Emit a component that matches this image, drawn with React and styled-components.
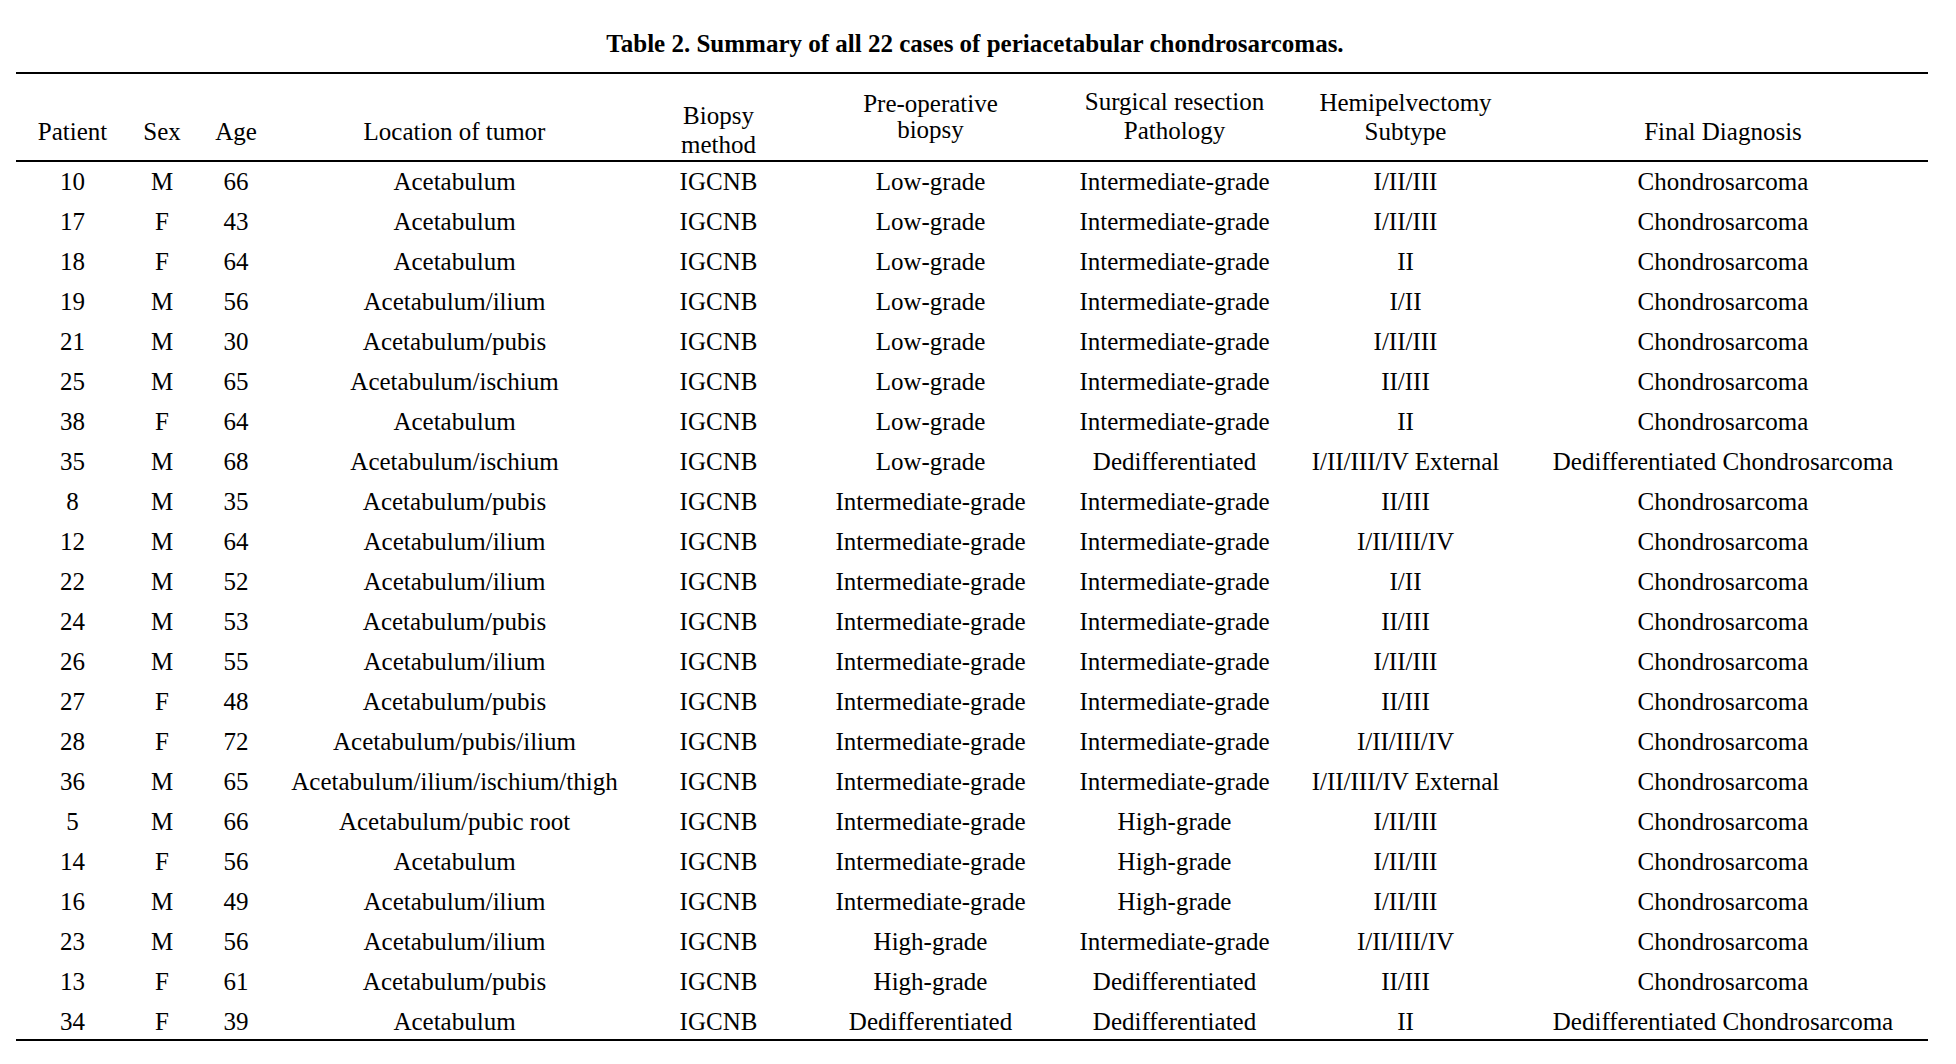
import React from "react";
import styled, { createGlobalStyle } from "styled-components";

const GlobalStyle = createGlobalStyle`
  html, body {
    margin: 0;
    padding: 0;
    background: #fff;
  }
  body {
    font-family: "Liberation Serif", "Times New Roman", serif;
    color: #000;
  }
`;

const COLUMNS = "113px 66px 82px 355px 173px 251px 237px 225px 410px";

const Page = styled.div`
  width: 1912px;
  padding: 0 16px;
`;

const Title = styled.h1`
  margin: 0 0 13px;
  padding: 29px 0 0 6px;
  font-size: 25px;
  line-height: 30px;
  font-weight: bold;
  text-align: center;
`;

const Table = styled.div`
  border-top: 2px solid #000;
  border-bottom: 2px solid #000;
  font-size: 25px;
`;

const Head = styled.div`
  display: grid;
  grid-template-columns: ${COLUMNS};
  height: 86px;
  border-bottom: 2px solid #000;
`;

const HeadCell = styled.div`
  display: flex;
  flex-direction: column;
  justify-content: flex-end;
  align-items: center;
  padding-bottom: ${props => props.$pb}px;
  line-height: ${props => props.$lh || 29}px;
  text-align: center;
  white-space: nowrap;
`;

const Row = styled.div`
  display: grid;
  grid-template-columns: ${COLUMNS};
  height: 40px;
  line-height: 40px;

  &:last-child {
    height: 37px;
  }
`;

const Cell = styled.div`
  text-align: center;
  white-space: nowrap;
`;

const headers = [
  { lines: ["Patient"], pb: 14 },
  { lines: ["Sex"], pb: 14 },
  { lines: ["Age"], pb: 14 },
  { lines: ["Location of tumor"], pb: 14 },
  { lines: ["Biopsy", "method"], pb: 1 },
  { lines: ["Pre-operative", "biopsy"], pb: 17, lh: 26 },
  { lines: ["Surgical resection", "Pathology"], pb: 15 },
  { lines: ["Hemipelvectomy", "Subtype"], pb: 14 },
  { lines: ["Final Diagnosis"], pb: 14 },
];

const CS = "Chondrosarcoma";
const DCS = "Dedifferentiated Chondrosarcoma";
const IG = "Intermediate-grade";
const LG = "Low-grade";
const HG = "High-grade";
const DD = "Dedifferentiated";

const rows = [
  ["10", "M", "66", "Acetabulum", LG, IG, "I/II/III", CS],
  ["17", "F", "43", "Acetabulum", LG, IG, "I/II/III", CS],
  ["18", "F", "64", "Acetabulum", LG, IG, "II", CS],
  ["19", "M", "56", "Acetabulum/ilium", LG, IG, "I/II", CS],
  ["21", "M", "30", "Acetabulum/pubis", LG, IG, "I/II/III", CS],
  ["25", "M", "65", "Acetabulum/ischium", LG, IG, "II/III", CS],
  ["38", "F", "64", "Acetabulum", LG, IG, "II", CS],
  ["35", "M", "68", "Acetabulum/ischium", LG, DD, "I/II/III/IV External", DCS],
  ["8", "M", "35", "Acetabulum/pubis", IG, IG, "II/III", CS],
  ["12", "M", "64", "Acetabulum/ilium", IG, IG, "I/II/III/IV", CS],
  ["22", "M", "52", "Acetabulum/ilium", IG, IG, "I/II", CS],
  ["24", "M", "53", "Acetabulum/pubis", IG, IG, "II/III", CS],
  ["26", "M", "55", "Acetabulum/ilium", IG, IG, "I/II/III", CS],
  ["27", "F", "48", "Acetabulum/pubis", IG, IG, "II/III", CS],
  ["28", "F", "72", "Acetabulum/pubis/ilium", IG, IG, "I/II/III/IV", CS],
  ["36", "M", "65", "Acetabulum/ilium/ischium/thigh", IG, IG, "I/II/III/IV External", CS],
  ["5", "M", "66", "Acetabulum/pubic root", IG, HG, "I/II/III", CS],
  ["14", "F", "56", "Acetabulum", IG, HG, "I/II/III", CS],
  ["16", "M", "49", "Acetabulum/ilium", IG, HG, "I/II/III", CS],
  ["23", "M", "56", "Acetabulum/ilium", HG, IG, "I/II/III/IV", CS],
  ["13", "F", "61", "Acetabulum/pubis", HG, DD, "II/III", CS],
  ["34", "F", "39", "Acetabulum", DD, DD, "II", DCS],
];

const App = () => {
  return (
    <Page>
      <GlobalStyle />
      <Title>Table 2. Summary of all 22 cases of periacetabular chondrosarcomas.</Title>

      <Table>
        <Head>
          {headers.map(h => (
            <HeadCell key={h.lines[0]} $pb={h.pb} $lh={h.lh}>
              {h.lines.map(line => (
                <span key={line}>{line}</span>
              ))}
            </HeadCell>
          ))}
        </Head>

        {rows.map(([id, sex, age, location, pre, surgical, subtype, diagnosis]) => (
          <Row key={id}>
            <Cell>{id}</Cell>
            <Cell>{sex}</Cell>
            <Cell>{age}</Cell>
            <Cell>{location}</Cell>
            <Cell>IGCNB</Cell>
            <Cell>{pre}</Cell>
            <Cell>{surgical}</Cell>
            <Cell>{subtype}</Cell>
            <Cell>{diagnosis}</Cell>
          </Row>
        ))}
      </Table>
    </Page>
  );
};

export default App;
